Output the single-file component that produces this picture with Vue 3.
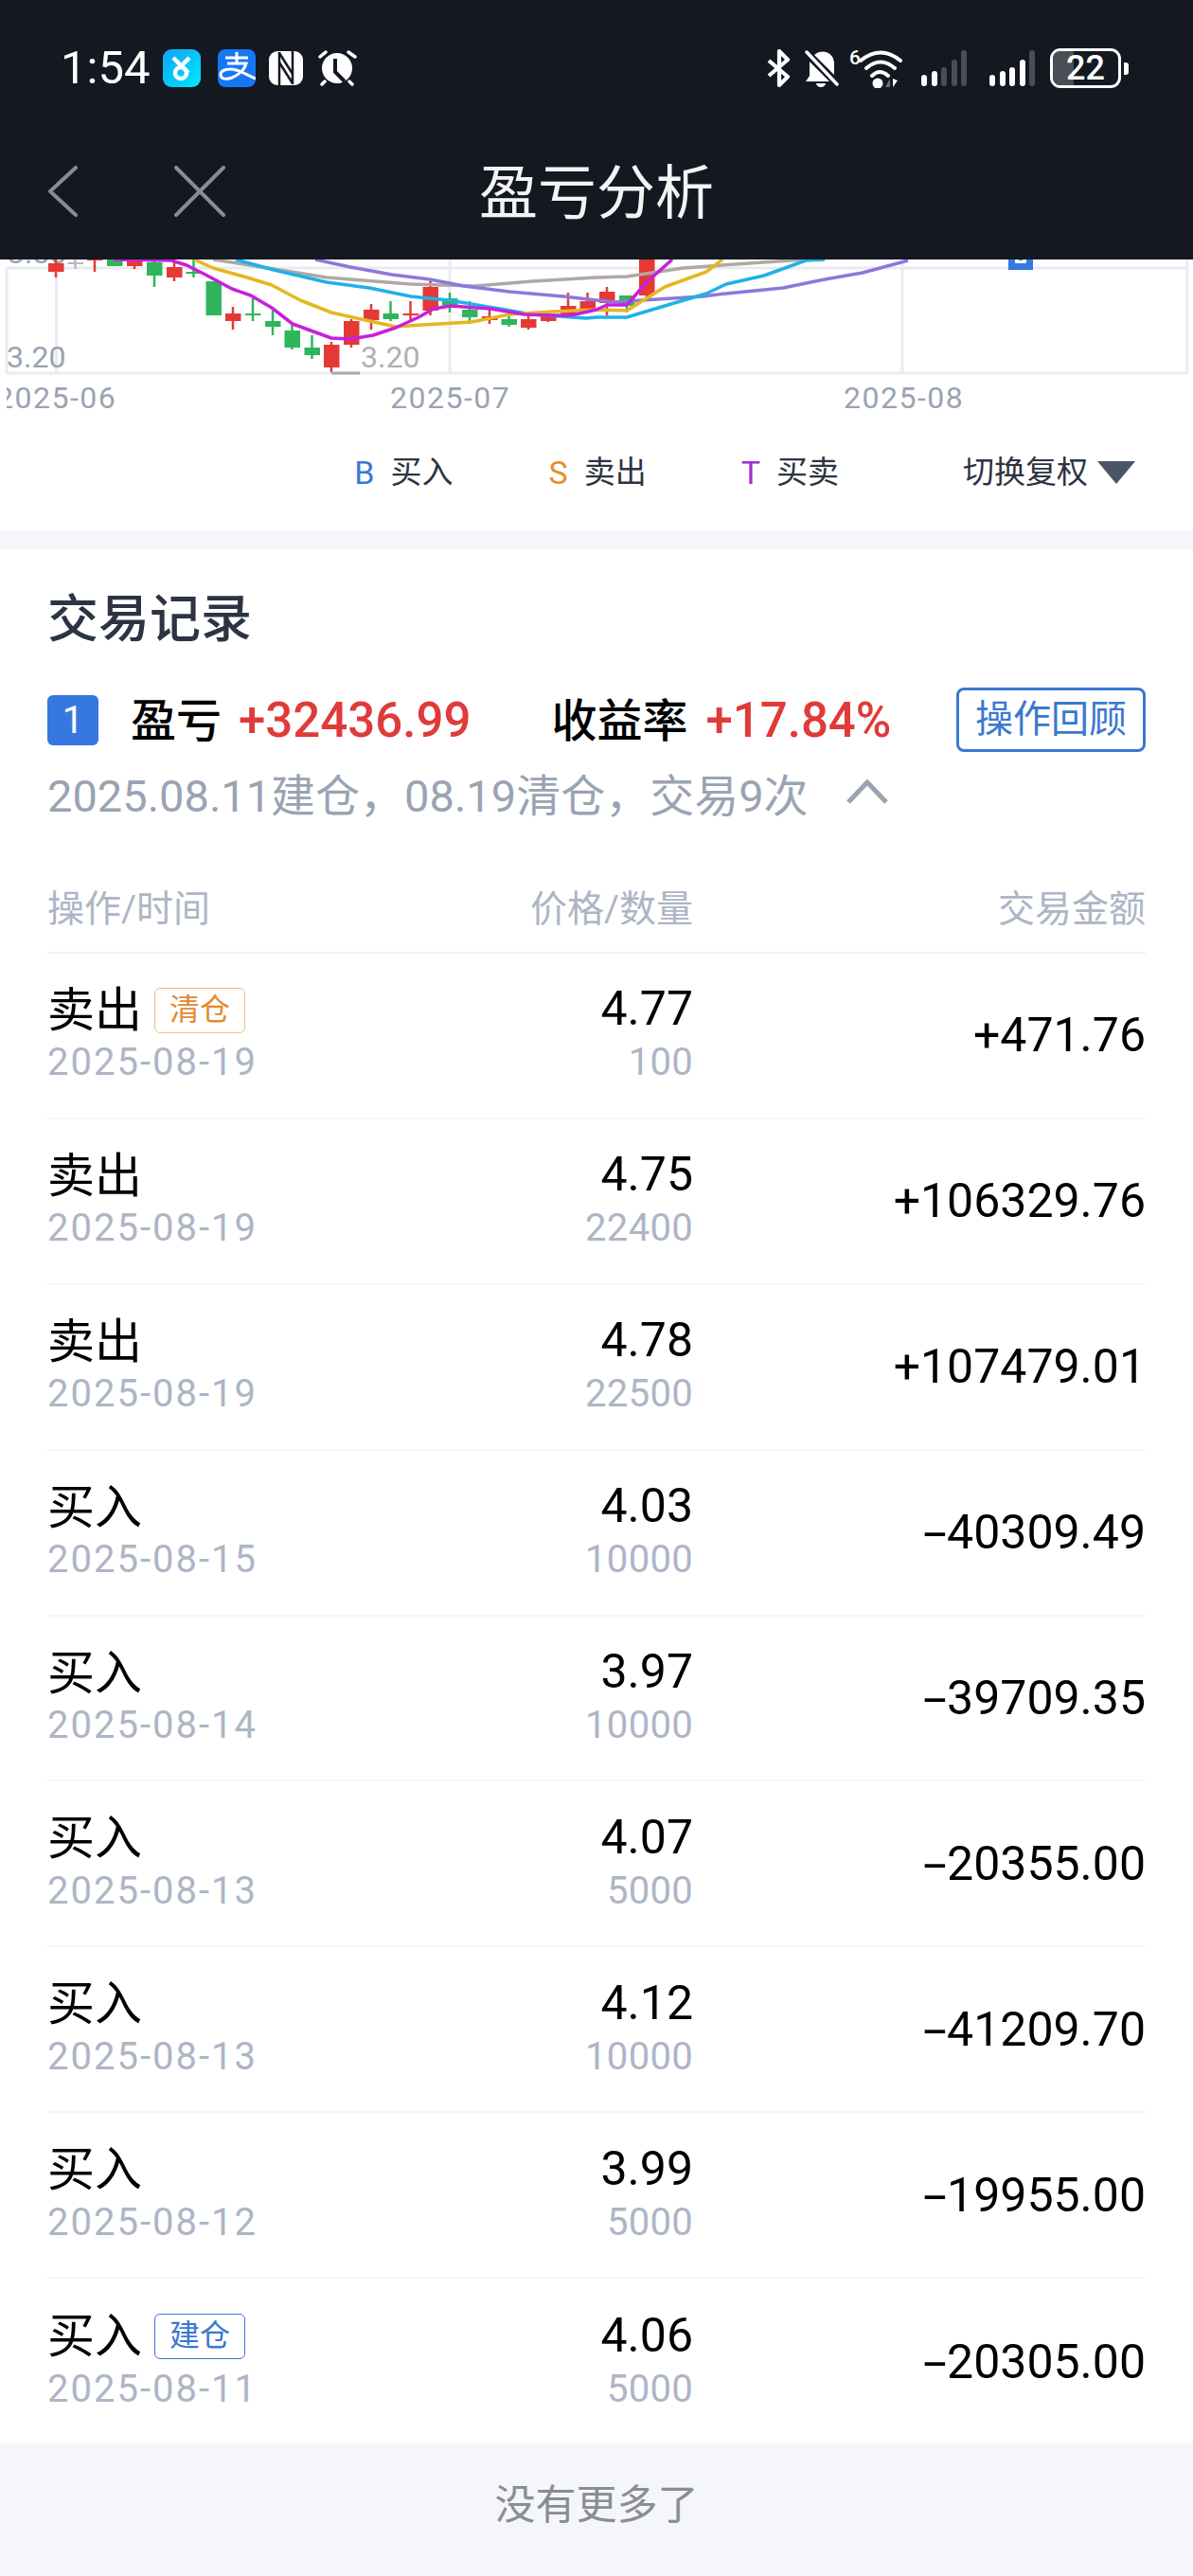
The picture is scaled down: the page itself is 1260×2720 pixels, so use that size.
<template>
  <div class="page">
    <header class="top">
      <div class="status">
        <div class="status__left">
          <span class="status__time">1:54</span>
          <svg class="ico-app" viewBox="0 0 40 40">
            <defs>
              <linearGradient id="appGrad" x1="0" y1="0" x2="1" y2="1">
                <stop offset="0" stop-color="#0fa4f4" />
                <stop offset="1" stop-color="#00e8ff" />
              </linearGradient>
            </defs>
            <rect width="40" height="40" rx="9" fill="url(#appGrad)" />
            <path d="M11 9l16 16M28 9l-9 9" stroke="#fff" stroke-width="4.500" fill="none" />
            <circle cx="19" cy="25" r="6" stroke="#fff" stroke-width="4.500" fill="none" />
          </svg>
          <svg class="ico-app ico-app--pay" viewBox="0 0 40 40">
            <rect width="40" height="40" rx="8" fill="#1677f5" />
            <path d="M8 9H32M20 3V15M10 15H30C28 22 22 27 15 30C10 32 3 32 3 27C3 22 9 21 14 21C22 21 30 27 40 31" stroke="#fff" stroke-width="3" fill="none" />
          </svg>
          <svg class="ico-nfc" viewBox="0 0 36 38">
            <rect x="0" y="1" width="36" height="36" rx="9" fill="#fff" />
            <path d="M11 2V37M25 1V36" stroke="#131821" stroke-width="2.500" />
            <path d="M11 3L25 25M11 13L25 35" stroke="#131821" stroke-width="2.500" />
          </svg>
          <svg class="ico-alarm" viewBox="0 0 41 38">
            <circle cx="20" cy="19" r="16" fill="#fff" />
            <path d="M18 9V23L28 33" stroke="#131821" stroke-width="4" fill="none" />
            <path d="M2 7L8 2M32 2L39 7M7 33L4 36M33 33L36 36" stroke="#fff" stroke-width="3.500" stroke-linecap="round" />
          </svg>
        </div>
        <div class="status__right">
          <svg class="ico-bt" viewBox="0 0 25 40">
            <path d="M2 28L22 11 13 2v36l9-9L2 12" stroke="#fff" stroke-width="4.200" fill="none" stroke-linejoin="round" />
          </svg>
          <svg class="ico-bell" viewBox="0 0 36 40">
            <path d="M10 6C18 -1 30 3 31 14V27z" fill="#fff" />
            <path d="M5 13L26 34H1L5 28z" fill="#fff" />
            <path d="M12 36h10a5 4 0 0 1-10 0z" fill="#fff" />
            <path d="M2 3L34 37" stroke="#fff" stroke-width="3.500" stroke-linecap="round" />
          </svg>
          <svg class="ico-wifi" viewBox="0 0 56 42">
            <text x="0" y="17" class="ico-wifi__six">6</text>
            <path d="M12 13Q33 -4 54 13M18 21Q33 8 48 21M24 29Q32 21 41 29" stroke="#fff" stroke-width="4" fill="none" stroke-linecap="round" />
            <circle cx="30" cy="37" r="5.500" fill="#fff" />
            <path d="M38 41l5-9v9z" fill="#6b6f76" />
            <path d="M46 32v9l5-7z" fill="#fff" />
          </svg>
          <div class="signal">
            <i v-for="(bar, i) in signalA" :key="i" :class="{ off: bar.off }" :style="{ height: bar.h + 'px' }"></i>
          </div>
          <div class="signal signal--b">
            <i v-for="(bar, i) in signalB" :key="i" :class="{ off: bar.off }" :style="{ height: bar.h + 'px' }"></i>
          </div>
          <div class="battery">
            <div class="battery__body">
              <span class="battery__fill"></span>
              <span class="battery__num">22</span>
            </div>
            <span class="battery__nub"></span>
          </div>
        </div>
      </div>
      <div class="nav">
        <div class="nav__icons">
          <svg class="nav__back" viewBox="0 0 32 54">
            <path d="M30 2L3 27l27 25" stroke="#878c99" stroke-width="4" fill="none" stroke-linecap="round" stroke-linejoin="round" />
          </svg>
          <svg class="nav__close" viewBox="0 0 54 54">
            <path d="M2 2l50 50M52 2L2 52" stroke="#878c99" stroke-width="4" fill="none" stroke-linecap="round" />
          </svg>
        </div>
        <div class="nav__title">盈亏分析</div>
      </div>
    </header>

    <section class="chart">
      <svg class="chart__svg" viewBox="0 0 1260 124" width="1260" height="124">
        <g transform="translate(0,-274)">
          <path d="M7 283H1254M7 394H1254M7 283V394M59.500 274V394M475 274V394M953 274V394M1254 274V394" stroke="#e9ebf0" stroke-width="3" fill="none" />
          <text x="8" y="278" class="lbl">3.80</text>
          <g v-for="c in candles" :key="c.x">
            <path :d="`M${c.x} ${c.wt}V${c.wb}`" :stroke="colors[c.k]" stroke-width="2.500" />
            <rect :x="c.x - 8" :y="c.t" width="16.500" :height="Math.max(c.b - c.t, 2)" :fill="colors[c.k]" />
          </g>
          <polyline v-for="l in lines" :key="l.color" :points="l.pts" :stroke="l.color" stroke-width="3.500" fill="none" stroke-linejoin="round" />
          <rect x="1065" y="262" width="26" height="23" fill="#3678e0" />
          <rect x="1072" y="270" width="12" height="8" fill="#fff" rx="1" />
          <rect x="1076" y="270" width="4" height="5" fill="#3678e0" />
          <text x="7" y="388" class="lbl">3.20</text>
          <text x="381" y="388" class="lbl lbl--min">3.20</text>
          <path d="M350 394H380" stroke="#aaa" stroke-width="3" />
        </g>
      </svg>
      <div class="chart__dates">
        <span class="chart__date chart__date--first">2025-06</span>
        <span class="chart__date chart__date--mid">2025-07</span>
        <span class="chart__date chart__date--last">2025-08</span>
      </div>
      <div class="legend">
        <span class="legend__item"><b class="c-buy">B</b>买入</span>
        <span class="legend__item"><b class="c-sell">S</b>卖出</span>
        <span class="legend__item"><b class="c-both">T</b>买卖</span>
        <span class="legend__switch">切换复权<i class="legend__tri"></i></span>
      </div>
    </section>

    <section class="card">
      <h2 class="card__title">交易记录</h2>
      <div class="summary">
        <span class="summary__badge">1</span>
        <span class="summary__label">盈亏</span>
        <span class="summary__num">+32436.99</span>
        <span class="summary__label summary__label--rate">收益率</span>
        <span class="summary__num summary__num--rate">+17.84%</span>
        <button class="summary__btn" type="button">操作回顾</button>
      </div>
      <div class="subline">
        <span>2025.08.11建仓，08.19清仓，交易9次</span>
        <svg class="subline__arrow" viewBox="0 0 44 26">
          <path d="M2 24L22 3l20 21" stroke="#9aa3b3" stroke-width="5" fill="none" />
        </svg>
      </div>
      <div class="thead">
        <span class="col-a">操作/时间</span>
        <span class="col-b">价格/数量</span>
        <span class="col-c">交易金额</span>
      </div>
      <div v-for="(row, i) in rows" :key="i" class="row">
        <div class="col-a">
          <div class="row__main row__main--name">
            {{ row.type }}
            <span v-if="row.tag" class="tag" :class="row.tag === '清仓' ? 'tag--sell' : 'tag--buy'">{{ row.tag }}</span>
          </div>
          <div class="row__sub row__sub--date">{{ row.date }}</div>
        </div>
        <div class="col-b">
          <div class="row__main row__main--num">{{ row.price }}</div>
          <div class="row__sub">{{ row.qty }}</div>
        </div>
        <div class="col-c row__amount"><span :class="{ minus: row.amount[0] === '-' }">{{ row.amount[0] }}</span>{{ row.amount.slice(1) }}</div>
      </div>
    </section>

    <footer class="foot">没有更多了</footer>
  </div>
</template>

<script setup>
const signalA = [
  { h: 12 }, { h: 16 }, { h: 20, off: true }, { h: 28, off: true }, { h: 38, off: true }
];
const signalB = [
  { h: 12 }, { h: 16 }, { h: 20 }, { h: 28 }, { h: 38, off: true }
];

const colors = { r: '#e53935', g: '#2fb65a', n: '#b4b8c0' };

const candles = [
  { x: 59, k: 'r', t: 278, b: 287, wt: 270, wb: 293 },
  { x: 79.5, k: 'n', t: 277, b: 279, wt: 270, wb: 284 },
  { x: 100, k: 'r', t: 270, b: 275, wt: 270, wb: 287 },
  { x: 121, k: 'g', t: 270, b: 281, wt: 270, wb: 281 },
  { x: 142, k: 'r', t: 270, b: 281, wt: 270, wb: 284 },
  { x: 163, k: 'g', t: 277, b: 291, wt: 270, wb: 303 },
  { x: 184, k: 'r', t: 282, b: 293, wt: 270, wb: 297 },
  { x: 204.5, k: 'g', t: 287, b: 289, wt: 270, wb: 293 },
  { x: 225.5, k: 'g', t: 297, b: 333, wt: 297, wb: 333 },
  { x: 246, k: 'r', t: 331, b: 339, wt: 324, wb: 348 },
  { x: 267, k: 'g', t: 331, b: 333, wt: 315, wb: 339 },
  { x: 288, k: 'g', t: 339, b: 345, wt: 328, wb: 354 },
  { x: 308.5, k: 'g', t: 349, b: 367, wt: 343, wb: 369 },
  { x: 329.5, k: 'g', t: 367, b: 375, wt: 354, wb: 379 },
  { x: 350, k: 'r', t: 364, b: 388, wt: 361, wb: 393 },
  { x: 371, k: 'r', t: 339, b: 364, wt: 337, wb: 367 },
  { x: 392, k: 'r', t: 327, b: 338, wt: 321, wb: 348 },
  { x: 412.5, k: 'g', t: 331, b: 337, wt: 318, wb: 339 },
  { x: 433.5, k: 'r', t: 331, b: 333, wt: 318, wb: 339 },
  { x: 454.5, k: 'r', t: 303, b: 328, wt: 297, wb: 333 },
  { x: 475, k: 'g', t: 315, b: 323, wt: 309, wb: 330 },
  { x: 496, k: 'g', t: 327, b: 335, wt: 318, wb: 342 },
  { x: 517, k: 'r', t: 334, b: 338, wt: 325, wb: 342 },
  { x: 537.5, k: 'g', t: 337, b: 343, wt: 330, wb: 345 },
  { x: 558, k: 'r', t: 337, b: 346, wt: 330, wb: 348 },
  { x: 579, k: 'r', t: 332, b: 339, wt: 328, wb: 340 },
  { x: 600, k: 'r', t: 323, b: 332, wt: 309, wb: 333 },
  { x: 620.5, k: 'r', t: 318, b: 328, wt: 309, wb: 330 },
  { x: 641, k: 'r', t: 308, b: 320, wt: 303, wb: 333 },
  { x: 662, k: 'g', t: 312, b: 323, wt: 312, wb: 330 },
  { x: 683, k: 'r', t: 270, b: 312, wt: 270, wb: 315 }
];

const lines = [
  {
    color: '#b0a8a4',
    pts: '225,274 289,284 345,293 434,300 502,302 562,297 630,293 662,292 722,283 791,278 851,274'
  },
  {
    color: '#8f76dd',
    pts: '333,274 370,282 414,290 454,295 490,302 538,308 595,313 630,317 650,319 678,317 742,313 767,310 827,304 871,295 911,288 959,275'
  },
  {
    color: '#1fb1e8',
    pts: '249,274 289,285 345,298 390,304 434,313 474,317 522,325 562,332 619,336 630,335 662,335 702,323 746,310 767,300 807,291 851,275 871,274'
  },
  {
    color: '#e3b81f',
    pts: '205,274 225,283 261,293 287,301 317,317 350,330 386,338 418,345 446,343 498,340 538,332 583,329 630,327 662,328 702,303 746,287 763,274'
  },
  {
    color: '#c91fdc',
    pts: '120,274 181,275 197,280 217,290 245,305 265,312 287,325 309,342 350,357 370,358 394,354 418,346 442,335 458,326 476,323 518,326 554,332 583,333 603,333 630,327 641,322 662,322 683,298 710,274'
  }
];

const rows = [
  { type: '卖出', tag: '清仓', date: '2025-08-19', price: '4.77', qty: '100', amount: '+471.76' },
  { type: '卖出', date: '2025-08-19', price: '4.75', qty: '22400', amount: '+106329.76' },
  { type: '卖出', date: '2025-08-19', price: '4.78', qty: '22500', amount: '+107479.01' },
  { type: '买入', date: '2025-08-15', price: '4.03', qty: '10000', amount: '-40309.49' },
  { type: '买入', date: '2025-08-14', price: '3.97', qty: '10000', amount: '-39709.35' },
  { type: '买入', date: '2025-08-13', price: '4.07', qty: '5000', amount: '-20355.00' },
  { type: '买入', date: '2025-08-13', price: '4.12', qty: '10000', amount: '-41209.70' },
  { type: '买入', date: '2025-08-12', price: '3.99', qty: '5000', amount: '-19955.00' },
  { type: '买入', tag: '建仓', date: '2025-08-11', price: '4.06', qty: '5000', amount: '-20305.00' }
];
</script>

<style>
html,
body {
  background: #fff;
}
</style>

<style scoped>
.page {
  width: 1260px;
  height: 2720px;
  overflow: hidden;
  font-family: Roboto, "Noto Sans CJK SC", sans-serif;
  background: #fff;
}

.top {
  height: 274px;
  background: #131821;
  color: #fff;
}

.status {
  height: 144px;
  padding: 51px 68px 0 64px;
  box-sizing: border-box;
  display: flex;
  justify-content: space-between;
}

.status__left,
.status__right {
  display: flex;
  align-items: flex-start;
}

.status__time {
  font-size: 49px;
  line-height: 42px;
  width: 108px;
}

.ico-app {
  width: 40px;
  height: 40px;
  margin-top: 1px;
}

.ico-app--pay {
  margin-left: 18px;
}

.ico-nfc {
  width: 36px;
  height: 38px;
  margin: 2px 0 0 14px;
}

.ico-alarm {
  width: 41px;
  height: 38px;
  margin: 2px 0 0 16px;
}

.ico-bt {
  width: 25px;
  height: 40px;
  margin-top: 1px;
}

.ico-bell {
  width: 36px;
  height: 40px;
  margin: 1px 0 0 15px;
}

.ico-wifi {
  width: 56px;
  height: 42px;
  margin-left: 11px;
}

.ico-wifi__six {
  font-size: 21px;
  font-weight: 500;
  fill: #fff;
}

.signal {
  display: flex;
  align-items: flex-end;
  gap: 4.500px;
  height: 40px;
  margin-left: 20px;
}

.signal--b {
  margin-left: 24px;
}

.signal i {
  width: 6px;
  background: #fff;
  border-radius: 3px;
}

.signal i.off {
  background: #4a4e55;
}

.battery {
  display: flex;
  align-items: center;
  margin-left: 16px;
}

.battery__body {
  position: relative;
  width: 75px;
  height: 42px;
  box-sizing: border-box;
  border: 3px solid #fff;
  border-radius: 11px;
  overflow: hidden;
}

.battery__fill {
  position: absolute;
  left: 0;
  top: 0;
  bottom: 0;
  width: 22px;
  background: #4a4e55;
}

.battery__num {
  position: relative;
  display: block;
  text-align: center;
  font-size: 36px;
  line-height: 36px;
  font-weight: 500;
}

.battery__nub {
  width: 5px;
  height: 13px;
  margin-left: 3px;
  background: #fff;
  border-radius: 0 3px 3px 0;
}

.nav {
  position: relative;
  height: 130px;
}

.nav__icons {
  display: flex;
  gap: 102px;
  padding: 31px 0 0 50px;
}

.nav__back {
  width: 32px;
  height: 54px;
}

.nav__close {
  width: 54px;
  height: 54px;
}

.nav__title {
  position: absolute;
  left: 0;
  right: 0;
  top: 3px;
  text-align: center;
  font-size: 62px;
  line-height: 116px;
  color: #f4f4f4;
}

.chart {
  height: 286px;
}

.chart__svg {
  display: block;
}

.lbl {
  font-size: 32px;
  fill: #9aa1af;
}

.lbl--min {
  fill: #b0b0b0;
}

.chart__dates {
  position: relative;
  height: 44px;
  overflow: hidden;
  font-size: 32px;
  line-height: 38px;
  color: #9aa3b3;
  margin-left: 7px;
}

.chart__date {
  position: absolute;
  top: 3px;
  letter-spacing: 1.500px;
}

.chart__date--first {
  left: -11px;
}

.chart__date--mid {
  left: 405px;
}

.chart__date--last {
  left: 884px;
}

.legend {
  display: flex;
  align-items: center;
  justify-content: flex-end;
  padding: 35px 61px 0 0;
  font-size: 33px;
  line-height: 44px;
  color: #2d3340;
}

.legend__item {
  display: flex;
  align-items: center;
  margin-right: 101px;
}

.legend__item:nth-child(2) {
  margin-right: 100px;
}

.legend__item:nth-child(3) {
  margin-right: 131px;
}

.legend__item b {
  font-weight: 400;
  font-size: 34px;
  margin-right: 17px;
}

.c-buy {
  color: #3a78d0;
}

.c-sell {
  color: #e88b2e;
}

.c-both {
  color: #a32ed8;
}

.legend__switch {
  display: flex;
  align-items: center;
}

.legend__tri {
  width: 0;
  height: 0;
  margin-left: 10px;
  border-left: 20px solid transparent;
  border-right: 20px solid transparent;
  border-top: 24px solid #4a5568;
}

.card {
  border-top: 20px solid #f4f6fa;
  padding: 0 50px 0 50px;
  height: 2020px;
  box-sizing: border-box;
}

.card__title {
  margin: 0;
  padding: 40px 0 0 0;
  font-size: 54px;
  line-height: 70px;
  font-weight: 500;
  color: #2c3444;
}

.summary {
  display: flex;
  align-items: center;
  height: 68px;
  margin-top: 36px;
  color: #000;
}

.summary__badge {
  width: 54px;
  height: 53px;
  background: #3678e0;
  color: #fff;
  border-radius: 6px;
  text-align: center;
  font-size: 40px;
  line-height: 53px;
}

.summary__label {
  font-size: 48px;
  font-weight: 500;
  margin-left: 34px;
  padding-bottom: 6px;
}

.summary__label--rate {
  margin-left: 85px;
}

.summary__num {
  font-size: 51px;
  font-weight: 500;
  color: #e03a3a;
  margin-left: 18px;
}

.summary__num--rate {
  margin-left: 19px;
}

.summary__btn {
  margin-left: auto;
  width: 200px;
  height: 68px;
  padding: 0;
  box-sizing: border-box;
  border: 3px solid #3a78d0;
  border-radius: 8px;
  background: #fff;
  color: #3a78d0;
  font-family: inherit;
  font-size: 40px;
  line-height: 60px;
}

.subline {
  display: flex;
  align-items: center;
  height: 60px;
  margin-top: 12px;
  font-size: 47px;
  color: #9aa3b3;
}

.subline__arrow {
  width: 44px;
  height: 26px;
  margin-left: 40px;
}

.thead {
  display: flex;
  align-items: center;
  height: 100px;
  margin-top: 41px;
  font-size: 39px;
  color: #adb5c6;
  border-bottom: 2px solid #f1f2f5;
  box-sizing: border-box;
}

.col-a {
  width: 400px;
  box-sizing: border-box;
}

.col-b {
  width: 282px;
  text-align: right;
}

.col-c {
  flex: 1;
  text-align: right;
}

.row {
  display: flex;
  align-items: center;
  height: 174.900px;
  box-sizing: border-box;
  border-bottom: 2px solid #f4f5f7;
}

.row:last-child {
  border-bottom: none;
}

.row__main {
  display: flex;
  align-items: center;
  height: 56px;
  font-size: 50px;
  color: #000;
}

.row__main--name {
  box-sizing: border-box;
  padding-bottom: 7px;
}

.row__main--num {
  justify-content: flex-end;
}

.row__sub {
  height: 56px;
  font-size: 40px;
  line-height: 58px;
  letter-spacing: 0.3px;
  color: #adb5c6;
}

.row__sub--date {
  letter-spacing: 2px;
}

.row__amount {
  font-size: 50px;
  color: #000;
}

.minus {
  display: inline-block;
  margin-left: 12px;
  transform: scaleX(1.800);
  transform-origin: right center;
}

.tag {
  height: 48px;
  width: 96px;
  box-sizing: border-box;
  margin: 10px 0 0 13px;
  border-radius: 6px;
  text-align: center;
  font-size: 32px;
  line-height: 44px;
}

.tag--buy {
  border: 1.500px solid #3a78d0;
  color: #3a78d0;
}

.tag--sell {
  border: 1.500px solid #eebf86;
  color: #e08a2e;
}

.foot {
  height: 140px;
  background: #f4f6fa;
  padding-top: 35px;
  box-sizing: border-box;
  text-align: center;
  font-size: 43px;
  line-height: 60px;
  color: #8a8d91;
}
</style>
